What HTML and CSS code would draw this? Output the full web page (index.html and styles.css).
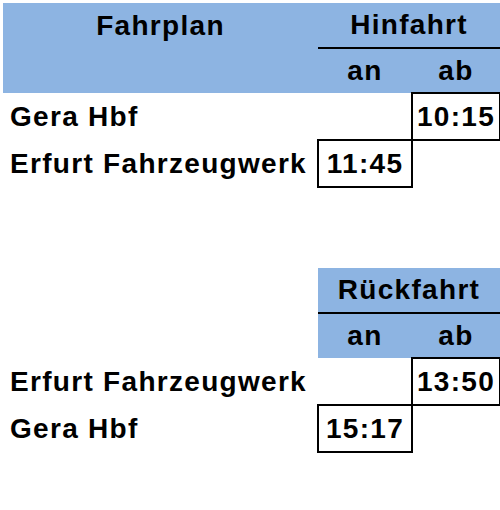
FILE: index.html
```html
<!DOCTYPE html>
<html lang="de">
<head>
<meta charset="utf-8">
<title>Fahrplan</title>
<link rel="stylesheet" href="styles.css">
</head>
<body>
<div class="page">
  <table class="plan">
    <colgroup><col class="c-label"><col class="c-an"><col class="c-ab"></colgroup>
    <tr class="head1">
      <th class="blue title">Fahrplan</th>
      <th class="blue dir" colspan="2">Hinfahrt</th>
    </tr>
    <tr class="head2">
      <th class="blue"></th>
      <th class="blue sub">an</th>
      <th class="blue sub">ab</th>
    </tr>
    <tr class="row">
      <td class="label">Gera Hbf</td>
      <td></td>
      <td class="time">10:15</td>
    </tr>
    <tr class="row">
      <td class="label">Erfurt Fahrzeugwerk</td>
      <td class="time">11:45</td>
      <td></td>
    </tr>
  </table>

  <table class="plan second">
    <colgroup><col class="c-label"><col class="c-an"><col class="c-ab"></colgroup>
    <tr class="head1">
      <td></td>
      <th class="blue dir" colspan="2">Rückfahrt</th>
    </tr>
    <tr class="head2">
      <td></td>
      <th class="blue sub">an</th>
      <th class="blue sub">ab</th>
    </tr>
    <tr class="row">
      <td class="label">Erfurt Fahrzeugwerk</td>
      <td></td>
      <td class="time">13:50</td>
    </tr>
    <tr class="row">
      <td class="label">Gera Hbf</td>
      <td class="time">15:17</td>
      <td></td>
    </tr>
  </table>
</div>
</body>
</html>
```

FILE: styles.css
```css
html, body {
  margin: 0;
  padding: 0;
  background: #ffffff;
}

.page {
  padding: 3px 0 0 3px;
  font-family: "Liberation Sans", Arial, sans-serif;
  font-weight: bold;
  font-size: 28px;
  letter-spacing: 1.3px;
  color: #000000;
}

.plan {
  border-collapse: collapse;
  width: 497px;
  table-layout: fixed;
}

.plan.second {
  margin-top: 80px;
}

.c-label { width: 315px; }
.c-an { width: 94px; }
.c-ab { width: 88px; }

.plan th,
.plan td {
  padding: 0;
  vertical-align: middle;
  font-weight: bold;
  line-height: 32px;
}

.head1 { height: 45px; }
.head2 { height: 45px; }
.row { height: 47px; }

.blue {
  background: #8db4e2;
}

.title,
.dir,
.sub {
  text-align: center;
}

.dir {
  border-bottom: 2px solid #000000;
}

.label {
  text-align: left;
  padding-left: 7px !important;
  white-space: nowrap;
}

.time {
  text-align: center;
  border: 2px solid #000000;
}
```
